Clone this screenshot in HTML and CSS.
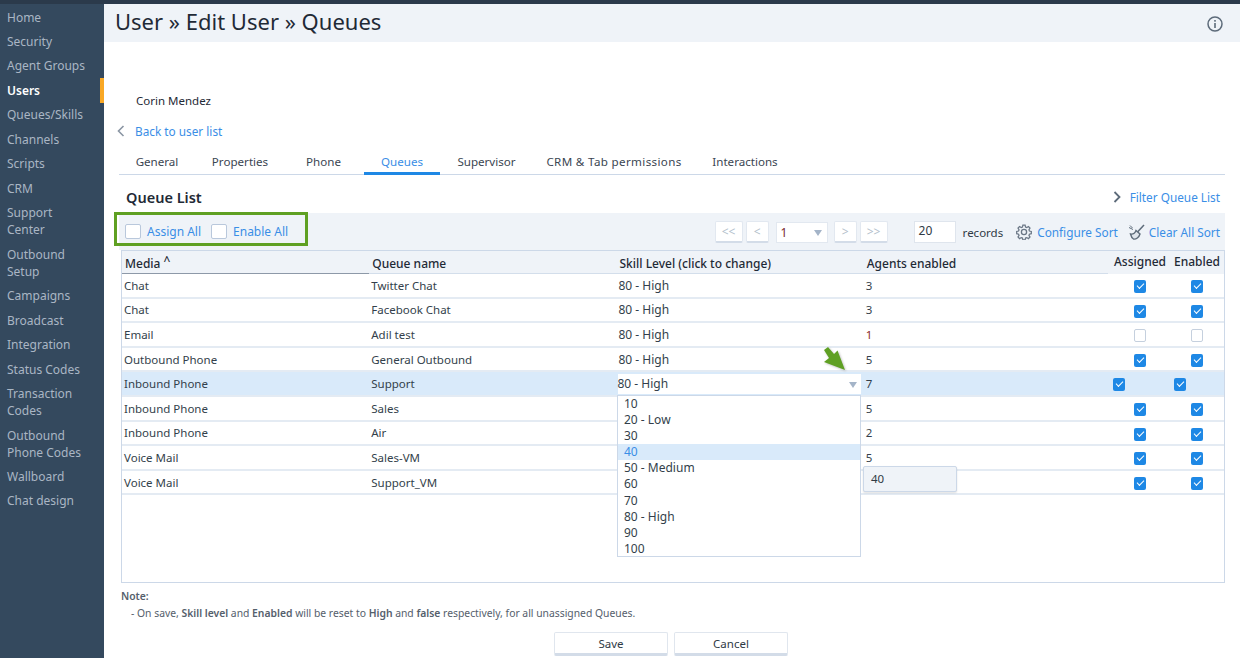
FILE: index.html
```html
<!DOCTYPE html>
<html lang="en">
<head>
<meta charset="utf-8">
<title>User » Edit User » Queues</title>
<link rel="stylesheet" href="styles.css">
</head>
<body>
<div class="topbar"></div>
<div class="app">
  <nav class="sidebar">
    <a class="nav-item">Home</a>
    <a class="nav-item">Security</a>
    <a class="nav-item">Agent Groups</a>
    <a class="nav-item active">Users</a>
    <a class="nav-item">Queues/Skills</a>
    <a class="nav-item">Channels</a>
    <a class="nav-item">Scripts</a>
    <a class="nav-item">CRM</a>
    <a class="nav-item">Support Center</a>
    <a class="nav-item">Outbound Setup</a>
    <a class="nav-item">Campaigns</a>
    <a class="nav-item">Broadcast</a>
    <a class="nav-item">Integration</a>
    <a class="nav-item">Status Codes</a>
    <a class="nav-item">Transaction Codes</a>
    <a class="nav-item">Outbound Phone Codes</a>
    <a class="nav-item">Wallboard</a>
    <a class="nav-item">Chat design</a>
  </nav>
  <main class="main">
    <header class="titlebar">
      <h1>User » Edit User » Queues</h1>
      <svg class="info" viewBox="0 0 16 16" width="16" height="16"><circle cx="8" cy="8" r="7" fill="none" stroke="#5d6b7a" stroke-width="1.5"/><rect x="7.2" y="7" width="1.6" height="5" fill="#5d6b7a"/><rect x="7.2" y="4" width="1.6" height="1.7" fill="#5d6b7a"/></svg>
    </header>
    <div class="username">Corin Mendez</div>
    <div class="backrow">
      <svg class="chev" viewBox="0 0 8 12" width="8" height="12"><path d="M6.5 1 L1.5 6 L6.5 11" fill="none" stroke="#8a95a3" stroke-width="1.6"/></svg>
      <a class="link">Back to user list</a>
    </div>
    <div class="tabs">
      <a class="tab t1">General</a>
      <a class="tab t2">Properties</a>
      <a class="tab t3">Phone</a>
      <a class="tab t4 current">Queues</a>
      <a class="tab t5">Supervisor</a>
      <a class="tab t6">CRM &amp; Tab permissions</a>
      <a class="tab t7">Interactions</a>
    </div>
    <div class="listhead">
      <h2>Queue List</h2>
      <div class="filter">
        <svg viewBox="0 0 8 12" width="8" height="12"><path d="M1.5 1 L6.5 6 L1.5 11" fill="none" stroke="#5d6b7a" stroke-width="1.8"/></svg>
        <a class="link">Filter Queue List</a>
      </div>
    </div>
    <div class="toolbar">
      <div class="assign">
        <span class="box"></span><a class="link wide">Assign All</a>
        <span class="box second"></span><a class="link wide">Enable All</a>
      </div>
      <div class="pager">
        <span class="pbtn w1">&lt;&lt;</span>
        <span class="pbtn w2">&lt;</span>
        <span class="pselect">1<i class="tri"></i></span>
        <span class="pbtn w2 gap1">&gt;</span>
        <span class="pbtn w1">&gt;&gt;</span>
        <span class="pinput">20</span>
        <span class="records">records</span>
        <svg class="gear" viewBox="0 0 16 16" width="16" height="16"><path d="M6.8 1h2.4l.4 2 1.3.6 1.8-1.1 1.6 1.7-1.1 1.7.5 1.3 2 .5v2.3l-2 .5-.5 1.3 1.1 1.7-1.6 1.7-1.8-1.1-1.3.5-.4 2H6.8l-.4-2-1.3-.5-1.8 1.1-1.6-1.7 1.1-1.7-.5-1.3-2-.5V7.700l2-.5.5-1.300-1.100-1.700 1.600-1.700 1.800 1.100 1.300-.6z" transform="translate(.4 .2) scale(.95)" fill="none" stroke="#6b7786" stroke-width="1.300"/><circle cx="8" cy="8" r="2.600" fill="none" stroke="#6b7786" stroke-width="1.300"/></svg>
        <a class="link cfg">Configure Sort</a>
        <svg class="broom" viewBox="0 0 18 18" width="18" height="18"><path d="M16 2 L9.500 9" stroke="#5d6b7a" stroke-width="1.500" fill="none"/><path d="M8 7.500 L12 11 C11 14.500 8 16.500 5.500 16 C4 15 3 13 2.500 11 C5 11.500 7 10 8 7.500Z" fill="#dfe5ec" stroke="#5d6b7a" stroke-width="1.400"/><path d="M1 4.500 L5 6.500 M2 2.500 L4.500 5" stroke="#5d6b7a" stroke-width="1"/></svg>
        <a class="link">Clear All Sort</a>
      </div>
    </div>
    <div class="tablewrap">
      <table class="grid">
        <colgroup><col class="c1"><col class="c2"><col class="c3"><col class="c4"><col class="c5"><col class="c6"></colgroup>
        <thead>
          <tr>
            <th class="under">Media <sup class="caret">^</sup></th>
            <th>Queue name</th>
            <th>Skill Level (click to change)</th>
            <th>Agents enabled</th>
            <th class="ctr plain">Assigned</th>
            <th class="ctr plain last">Enabled</th>
          </tr>
        </thead>
        <tbody>
          <tr><td>Chat</td><td>Twitter Chat</td><td>80 - High</td><td>3</td><td class="ctr"><span class="check"></span></td><td class="ctr last"><span class="check"></span></td></tr>
          <tr><td>Chat</td><td>Facebook Chat</td><td>80 - High</td><td>3</td><td class="ctr"><span class="check"></span></td><td class="ctr last"><span class="check"></span></td></tr>
          <tr><td>Email</td><td>Adil test</td><td>80 - High</td><td class="red">1</td><td class="ctr"><span class="uncheck"></span></td><td class="ctr last"><span class="uncheck"></span></td></tr>
          <tr><td>Outbound Phone</td><td>General Outbound</td><td>80 - High</td><td>5</td><td class="ctr"><span class="check"></span></td><td class="ctr last"><span class="check"></span></td></tr>
          <tr class="sel"><td>Inbound Phone</td><td>Support</td><td class="selcell"><div class="select">80 - High<i class="tri"></i></div></td><td>7</td><td class="left"><span class="check"></span></td><td class="left2"><span class="check"></span></td></tr>
          <tr><td>Inbound Phone</td><td>Sales</td><td></td><td>5</td><td class="ctr"><span class="check"></span></td><td class="ctr last"><span class="check"></span></td></tr>
          <tr><td>Inbound Phone</td><td>Air</td><td></td><td>2</td><td class="ctr"><span class="check"></span></td><td class="ctr last"><span class="check"></span></td></tr>
          <tr><td>Voice Mail</td><td>Sales-VM</td><td></td><td>5</td><td class="ctr"><span class="check"></span></td><td class="ctr last"><span class="check"></span></td></tr>
          <tr><td>Voice Mail</td><td>Support_VM</td><td></td><td></td><td class="ctr"><span class="check"></span></td><td class="ctr last"><span class="check"></span></td></tr>
        </tbody>
      </table>
      <ul class="dropdown">
        <li>10</li><li>20 - Low</li><li>30</li><li class="hover">40</li><li>50 - Medium</li><li>60</li><li>70</li><li>80 - High</li><li>90</li><li>100</li>
      </ul>
      <div class="tooltip">40</div>
      <svg class="arrow" viewBox="0 0 22 24" width="22" height="24"><path d="M0 3 L4 0 L10 7 L13.500 3.500 L21 23 L0 15 L5 11Z" fill="#5fa023"/></svg>
    </div>
    <div class="note">
      <div class="note-title">Note:</div>
      <div class="note-body">- On save, <b>Skill level</b> and <b>Enabled</b> will be reset to <b>High</b> and <b>false</b> respectively, for all unassigned Queues.</div>
    </div>
    <div class="actions">
      <button class="btn">Save</button>
      <button class="btn">Cancel</button>
    </div>
  </main>
</div>
</body>
</html>
```
FILE: styles.css
```css
* { box-sizing: border-box; }
html, body { margin: 0; height: 658px; overflow: hidden; }
body { font-family: "Noto Sans", "Open Sans", sans-serif; font-size: 12px; color: #2f3a45; background: #fff; }
.topbar { height: 4px; background: #2b3a4b; }
.app { display: flex; height: 654px; }

.sidebar { width: 104px; flex: none; background: #34495e; padding-top: 1px; }
.nav-item { display: block; padding: 3.5px 14px 3.97px 7px; font-size: 12px; line-height: 17px; color: #aab6c4; }
.nav-item.active { color: #fff; font-weight: 600; box-shadow: inset -4px 0 0 #f9a825; }

.main { flex: 1; min-width: 0; display: flex; flex-direction: column; }
.titlebar { height: 38px; flex: none; background: #eff3f8; display: flex; align-items: center; justify-content: space-between; padding: 0 17px 0 11px; }
.titlebar h1 { margin: 0 0 3px; font-size: 22px; font-weight: 400; color: #1f2a36; line-height: 35px; }
.info { margin-top: 1px; }

.username { margin: 51px 0 0 32px; line-height: 16px; font-size: 11.5px; color: #1f2a36; flex: none; }
.backrow { margin: 14px 0 0 13px; display: flex; align-items: center; gap: 10px; line-height: 16px; flex: none; }
.link { color: #3a8ee6; font-size: 11.8px; white-space: nowrap; }
.link.wide { font-size: 12px; }

.tabs { margin: 8px 15px 0 15px; height: 28px; flex: none; display: flex; border-bottom: 1px solid #ccd8e8; }
.tab { font-size: 11.6px; line-height: 16px; color: #3b4652; padding-top: 7px; text-align: center; height: 27px; white-space: nowrap; }
.t1 { width: 76px; }
.t2 { width: 90px; }
.t3 { width: 77px; }
.t4 { width: 76px; margin-left: 2px; }
.t5 { width: 93px; }
.t6 { width: 162px; letter-spacing: .03em; }
.t7 { width: 100px; }
.current { color: #3a8ee6; border-bottom: 3px solid #1e88e5; height: 28px; }

.listhead { margin: 12px 20px 0 22px; height: 20px; flex: none; display: flex; justify-content: space-between; align-items: center; }
.listhead h2 { margin: 0; font-size: 14.5px; font-weight: 600; color: #1f2a36; }
.filter { display: flex; align-items: center; gap: 9px; }

.toolbar { margin: 6px 15px 0 15px; height: 37px; flex: none; background: #eff3f8; display: flex; align-items: center; justify-content: space-between; padding-right: 5px; }
.assign { margin-left: -5px; align-self: flex-start; margin-top: -1px; width: 194px; height: 34px; border: 3px solid #5fa023; display: flex; align-items: center; padding: 5px 0 0 8px; }
.box { width: 16px; height: 15px; background: #fff; border: 1px solid #b9c8dc; border-radius: 2px; margin-right: 6px; }
.box.second { margin-left: 10px; margin-right: 6px; }

.pager { display: flex; align-items: center; margin-top: 1px; }
.pbtn { height: 22px; margin-right: 3px; background: #fff; border: 1px solid #e2e8f0; border-bottom: 2px solid #d3dce8; border-radius: 2px; color: #b3bfcc; font-size: 12px; line-height: 20px; text-align: center; }
.w1 { width: 28px; }
.w2 { width: 23px; }
.gap1 { margin-left: 6px; }
.pselect { position: relative; width: 52px; height: 21px; margin-left: 4px; padding-left: 4px; background: #fff; border: 1px solid #e2e8f0; color: #7a2a2a; line-height: 19px; }
.tri { position: absolute; right: 5px; top: 7px; width: 0; height: 0; border: 4.5px solid transparent; border-top: 6px solid #a4b4c8; border-bottom: 0; }
.pinput { width: 42px; height: 22px; margin-left: 23px; background: #fff; border: 1px solid #dfe5ed; padding-left: 4px; line-height: 18px; font-size: 12px; }
.records { margin-left: 7px; margin-right: 13px; font-size: 11.5px; }
.gear { margin-right: 5px; }
.cfg { margin-right: 10px; }
.broom { margin-right: 3px; }

.tablewrap { position: relative; flex: none; margin: 0 15px 0 17px; height: 333px; border: 1px solid #ccd8e8; }
.grid { width: 100%; table-layout: fixed; border-collapse: collapse; }
.c1, .c2, .c3 { width: 247.25px; }
.c4 { width: 244.25px; }
.c5 { width: 64px; }
.grid thead tr { height: 22px; background: #eff3f8; }
.grid th { font-size: 12px; font-weight: 500; color: #1f2a36; text-align: left; padding: 4px 3px 0; white-space: nowrap; border-bottom: 1px solid #d3deeb; }
.grid th.under { border-bottom: 1px solid #8d99a8; }
.grid th.plain { border-bottom-color: #eff3f8; }
.caret { font-size: 12px; line-height: 0; vertical-align: 3px; }
.grid td { height: 24.6px; padding: 0 2px; font-size: 11.5px; color: #333f4b; border-bottom: 2px solid #e4ebf3; white-space: nowrap; }
.grid td:nth-child(3) { font-size: 12px; }
.grid .ctr { text-align: center; padding: 0; }
.grid .ctr.last { padding-right: 2px; }
.grid .left { text-align: left; padding: 0 0 0 5px; }
.grid .left2 { text-align: left; padding: 0 0 0 2px; }
.red { color: #8a2a2a !important; }
.sel td { background: #d9eafa; }
.grid td.selcell { padding: 0; }
.check { display: inline-block; position: relative; vertical-align: middle; width: 12px; height: 13px; border-radius: 2px; background: #1e88e5; }
.check::after { content: ""; position: absolute; left: 3px; top: 3px; width: 6px; height: 3px; border-left: 1.5px solid #fff; border-bottom: 1.5px solid #fff; transform: rotate(-45deg); }
.uncheck { display: inline-block; vertical-align: middle; width: 12px; height: 13px; border: 1px solid #c5d0de; border-radius: 2px; background: #fff; }
.select { position: relative; height: 20px; width: 243px; background: #fff; margin-left: 1px; line-height: 20px; }
.select .tri { right: 4px; top: 8px; }

.dropdown { position: absolute; left: 495px; top: 144px; width: 244px; height: 162px; margin: 0; padding: 0; list-style: none; background: #fff; border: 1px solid #ccd8e8; }
.dropdown li { height: 16.1px; line-height: 16px; font-size: 12px; padding-left: 6px; color: #333f4b; }
.dropdown .hover { background: #d9eafa; color: #3a8ee6; }
.tooltip { position: absolute; left: 741px; top: 215px; width: 94px; height: 26px; background: #eff3f8; border: 1px solid #ccd8e8; border-radius: 2px; box-shadow: 0 1px 2px rgba(0,0,0,.12); padding-left: 7px; line-height: 24px; font-size: 11.5px; }
.arrow { position: absolute; left: 702px; top: 96px; filter: drop-shadow(1px 1px 1px rgba(0,0,0,.25)); }

.note { flex: none; margin: 5px 0 0 17px; color: #55606c; font-size: 10.35px; line-height: 16px; }
.note-title { font-weight: 600; }
.note-body { margin: 1px 0 0 10px; }
.note b { font-weight: 600; }
.actions { flex: none; margin-top: 11px; display: flex; justify-content: center; gap: 6px; padding-right: 2px; }
.btn { width: 114px; height: 24px; background: #fff; border: 1px solid #e0e6ee; border-bottom: 3px solid #d3dce8; border-radius: 2px; font-family: inherit; font-size: 11.5px; color: #2f3a45; padding: 0; }
```
